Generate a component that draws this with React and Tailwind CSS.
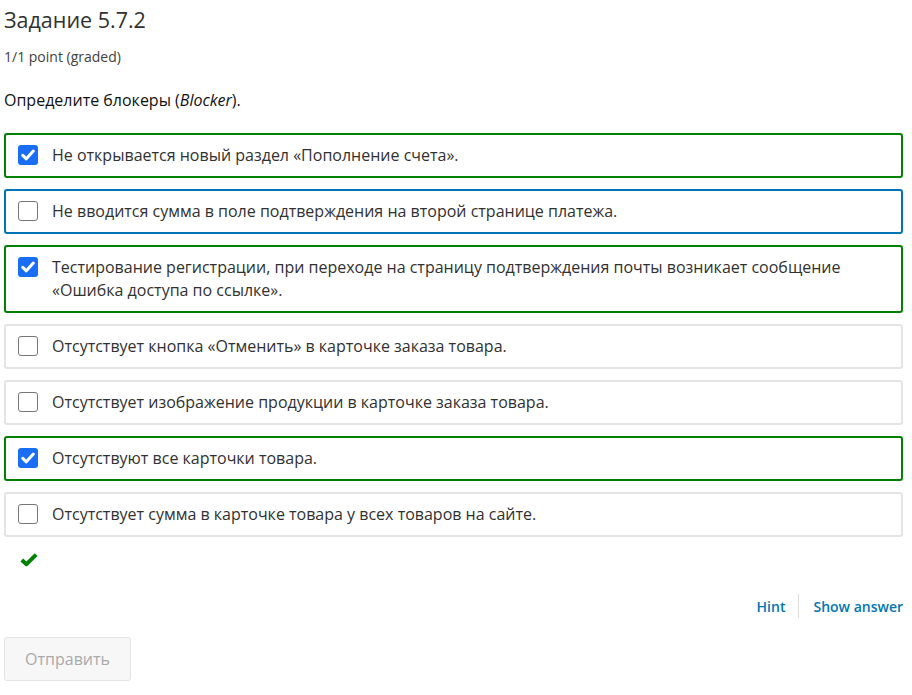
import React from "react";

const options = [
  { text: "Не открывается новый раздел «Пополнение счета».", checked: true, state: "correct" },
  { text: "Не вводится сумма в поле подтверждения на второй странице платежа.", checked: false, state: "focus" },
  {
    text: "Тестирование регистрации, при переходе на страницу подтверждения почты возникает сообщение «Ошибка доступа по ссылке».",
    checked: true,
    state: "correct",
  },
  { text: "Отсутствует кнопка «Отменить» в карточке заказа товара.", checked: false, state: "none" },
  { text: "Отсутствует изображение продукции в карточке заказа товара.", checked: false, state: "none" },
  { text: "Отсутствуют все карточки товара.", checked: true, state: "correct" },
  { text: "Отсутствует сумма в карточке товара у всех товаров на сайте.", checked: false, state: "none" },
];

function Box({ checked }) {
  if (checked) {
    return (
      <span className="mt-[1px] flex h-[20px] w-[20px] shrink-0 items-center justify-center rounded-[3px] bg-[#1a6ef5]">
        <svg width="14" height="12" viewBox="0 0 14 12">
          <path d="M1.8 6.4 L5.3 9.8 L12.3 2" fill="none" stroke="#fff" strokeWidth="3" strokeLinecap="round" strokeLinejoin="round" />
        </svg>
      </span>
    );
  }
  return <span className="mt-[1px] h-[20px] w-[20px] shrink-0 rounded-[3px] border border-[#767676] bg-white" />;
}

export default function App() {
  const border = {
    correct: "border-[#008100]",
    focus: "border-[#0075b4]",
    none: "border-[#e4e4e4]",
  };

  return (
    <div className="min-h-screen bg-white text-[#313131]" style={{ fontFamily: "'Open Sans', sans-serif" }}>
      <div className="w-[903px] pl-[4px] pt-[4px]">
        <h2 className="text-[21.5px] leading-[32px] text-[#313131]">Задание 5.7.2</h2>
        <div className="mt-[11px] text-[14px] leading-[20px] text-[#414141]">1/1 point (graded)</div>
        <p className="mt-[21px] text-[16px] leading-[24px] text-[#111]">
          Определите блокеры (<em>Blocker</em>).
        </p>

        <div className="mt-[21px] flex flex-col gap-[11px]">
          {options.map((o, i) => (
            <label
              key={i}
              className={`flex items-start gap-[14px] rounded-[3px] border-2 ${border[o.state]} px-[12px] py-[9px] text-[16px] leading-[23px] text-[#313131]`}
            >
              <Box checked={o.checked} />
              <span>{o.text}</span>
            </label>
          ))}
        </div>

        <div className="mt-[15px] pl-[16px]">
          <svg width="18" height="15" viewBox="0 0 18 15" className="block">
            <path d="M1.8 8 L6.5 12.2 L16.2 2.6" fill="none" stroke="#008100" strokeWidth="4" strokeLinejoin="round" />
          </svg>
        </div>

        <div className="mt-[27px] flex h-[24px] items-center justify-end text-[14px] font-semibold text-[#0075b4]">
          <span className="pr-[13px]">Hint</span>
          <span className="h-[24px] w-px bg-[#ddd]" />
          <span className="pl-[14px]">Show answer</span>
        </div>

        <button className="mt-[19px] h-[44px] w-[127px] rounded-[3px] border border-[#e4e4e4] bg-[#f7f7f7] text-[16px] text-[#a9aaaa]">
          Отправить
        </button>
      </div>
    </div>
  );
}
